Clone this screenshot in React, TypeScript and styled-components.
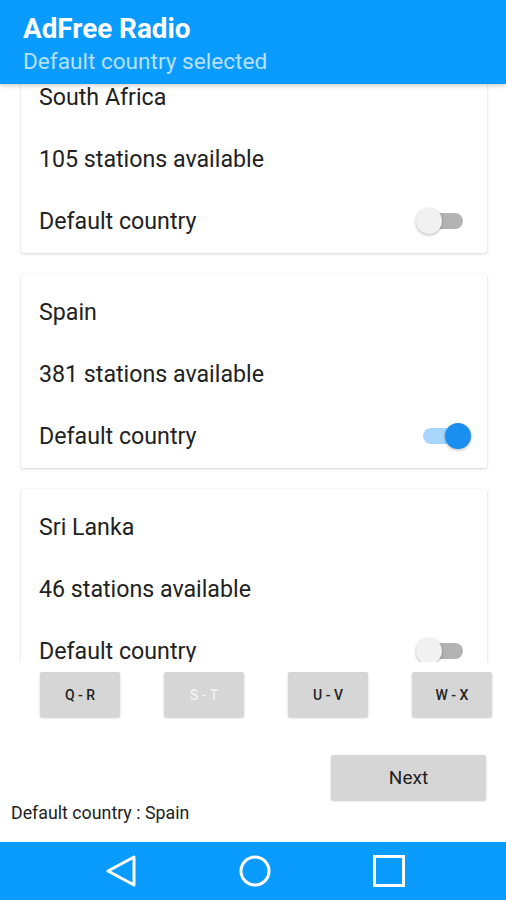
import * as React from 'react';
import styled, { createGlobalStyle } from 'styled-components';

const GlobalStyle = createGlobalStyle`
  html, body {
    margin: 0;
    padding: 0;
    background: #ffffff;
  }
  * {
    box-sizing: border-box;
  }
`;

const Screen = styled.div`
  width: 506px;
  height: 900px;
  display: flex;
  flex-direction: column;
  background: #ffffff;
  font-family: Roboto, 'Noto Sans', sans-serif;
  overflow: hidden;
`;

const AppBar = styled.header`
  position: relative;
  z-index: 2;
  height: 84px;
  flex-shrink: 0;
  background: #0a9bff;
  padding: 14px 23px 0;
  box-shadow: 0 2px 4px rgba(0, 0, 0, 0.18);
`;

const Title = styled.h1`
  margin: 0;
  font-size: 27.8px;
  line-height: 30px;
  font-weight: 700;
  color: #ffffff;
`;

const Subtitle = styled.div`
  margin-top: 5px;
  font-size: 22.6px;
  line-height: 26px;
  color: #b5e0ff;
`;

const ListViewport = styled.div`
  height: 578px;
  flex-shrink: 0;
  overflow: hidden;
`;

const ListInner = styled.div`
  display: flex;
  flex-direction: column;
  gap: 21px;
  margin-top: -25px;
  padding: 0 19px 0 21px;
`;

const Card = styled.div`
  background: #ffffff;
  border-radius: 2px;
  padding: 7px 0 1px;
  box-shadow: 0 1px 3px rgba(0, 0, 0, 0.16), 0 0 1px rgba(0, 0, 0, 0.12);
`;

const Row = styled.div`
  height: 62px;
  display: flex;
  align-items: center;
  justify-content: space-between;
  padding: 0 16px 0 18px;
  font-size: 23.2px;
  color: #222222;
`;

const SwitchBox = styled.div`
  position: relative;
  width: 56px;
  height: 28px;
`;

const Track = styled.div<{ $on: boolean }>`
  position: absolute;
  left: 8px;
  right: 8px;
  top: 6px;
  height: 16px;
  border-radius: 8px;
  background: ${p => (p.$on ? '#a8d5fb' : '#b3b3b3')};
`;

const Thumb = styled.div<{ $on: boolean }>`
  position: absolute;
  top: 1px;
  left: ${p => (p.$on ? '30px' : '1px')};
  width: 26px;
  height: 26px;
  border-radius: 50%;
  background: ${p => (p.$on ? '#1b8ff0' : '#f1f1f1')};
  box-shadow: 0 1px 3px rgba(0, 0, 0, 0.3);
`;

const LetterRow = styled.div`
  display: flex;
  gap: 44px;
  padding-left: 40px;
  margin-top: 10px;
`;

const LetterButton = styled.button<{ $disabled?: boolean }>`
  width: 80px;
  height: 45px;
  border: none;
  border-radius: 2px;
  background: #d6d6d6;
  font-family: Roboto, 'Noto Sans', sans-serif;
  font-size: 14px;
  font-weight: 500;
  color: ${p => (p.$disabled ? '#f2f2f2' : '#222222')};
  box-shadow: 0 1px 2px rgba(0, 0, 0, 0.22);
  padding: 0;
`;

const NextRow = styled.div`
  display: flex;
  justify-content: flex-end;
  padding-right: 20px;
  margin-top: 38px;
`;

const NextButton = styled.button`
  width: 155px;
  height: 45px;
  border: none;
  border-radius: 2px;
  background: #d6d6d6;
  font-family: Roboto, 'Noto Sans', sans-serif;
  font-size: 19px;
  color: #222222;
  box-shadow: 0 1px 2px rgba(0, 0, 0, 0.22);
`;

const Status = styled.div`
  padding-left: 11px;
  margin-top: 3px;
  font-size: 17.8px;
  line-height: 20px;
  color: #222222;
`;

const NavBar = styled.nav`
  margin-top: auto;
  height: 58px;
  flex-shrink: 0;
  background: #0a9bff;
  display: flex;
  align-items: center;
  padding-left: 104px;
  gap: 100px;
`;

const NavIcon = styled.svg`
  width: 34px;
  height: 34px;
  display: block;
`;

interface Country {
  name: string;
  stations: number;
  isDefault: boolean;
}

const countries: Country[] = [
  { name: 'South Africa', stations: 105, isDefault: false },
  { name: 'Spain', stations: 381, isDefault: true },
  { name: 'Sri Lanka', stations: 46, isDefault: false },
];

const Switch = ({ on }: { on: boolean }) => (
  <SwitchBox>
    <Track $on={on} />
    <Thumb $on={on} />
  </SwitchBox>
);

const letters = [
  { label: 'Q - R' },
  { label: 'S - T', disabled: true },
  { label: 'U - V' },
  { label: 'W - X' },
];

export default function App() {
  return (
    <Screen>
      <GlobalStyle />
      <AppBar>
        <Title>AdFree Radio</Title>
        <Subtitle>Default country selected</Subtitle>
      </AppBar>
      <ListViewport>
        <ListInner>
          {countries.map(c => (
            <Card key={c.name}>
              <Row>{c.name}</Row>
              <Row>{c.stations} stations available</Row>
              <Row>
                Default country
                <Switch on={c.isDefault} />
              </Row>
            </Card>
          ))}
        </ListInner>
      </ListViewport>
      <LetterRow>
        {letters.map(l => (
          <LetterButton key={l.label} $disabled={l.disabled}>{l.label}</LetterButton>
        ))}
      </LetterRow>
      <NextRow>
        <NextButton>Next</NextButton>
      </NextRow>
      <Status>Default country : Spain</Status>
      <NavBar>
        <NavIcon viewBox="0 0 34 34">
          <path d="M30 3 L4 17 L30 31 Z" fill="none" stroke="#fff" strokeWidth="3" strokeLinejoin="round" />
        </NavIcon>
        <NavIcon viewBox="0 0 34 34">
          <circle cx="17" cy="17" r="14" fill="none" stroke="#fff" strokeWidth="3" />
        </NavIcon>
        <NavIcon viewBox="0 0 34 34">
          <rect x="2.5" y="2.5" width="29" height="29" fill="none" stroke="#fff" strokeWidth="3" />
        </NavIcon>
      </NavBar>
    </Screen>
  );
}
